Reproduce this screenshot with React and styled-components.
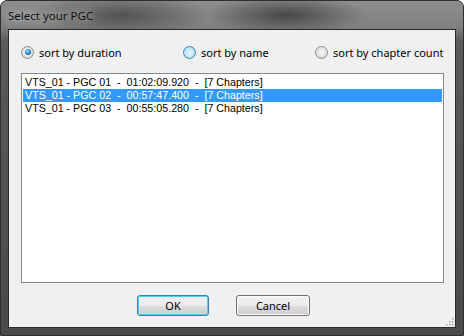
import React, { useState } from "react";
import styled, { createGlobalStyle } from "styled-components";

const GlobalStyle = createGlobalStyle`
  html, body {
    margin: 0;
    padding: 0;
    background: #ffffff;
  }
`;

const Window = styled.div`
  width: 464px;
  height: 336px;
  box-sizing: border-box;
  display: flex;
  flex-direction: column;
  border-radius: 7px 7px 0 0;
  border: 1px solid #2e2e2e;
  background:
    radial-gradient(ellipse 90px 22px at 120px 14px, rgba(40, 40, 40, 0.55), transparent),
    radial-gradient(ellipse 80px 20px at 285px 14px, rgba(30, 30, 30, 0.6), transparent),
    linear-gradient(to bottom, #8d8d8d 0, #808080 26px, #5a5a5a 40px, #4a4a4a 100%);
  font-family: "Noto Sans", "Open Sans", sans-serif;
`;

const TitleBar = styled.div`
  height: 28px;
  display: flex;
  align-items: center;
  padding-left: 7px;
  font-size: 11.5px;
  color: #111;
  text-shadow: 0 0 8px rgba(255, 255, 255, 0.9);
`;

const Client = styled.div`
  flex: 1;
  margin: 0 7px 7px 7px;
  border: 1px solid #2a2a2a;
  background: #f0f0f0;
  display: flex;
  flex-direction: column;
  padding: 12px 11px 0 12px;
  position: relative;
`;

const RadioRow = styled.div`
  display: grid;
  grid-template-columns: 162px 132px auto;
  height: 20px;
  align-items: center;
`;

const RadioLabel = styled.label`
  display: flex;
  align-items: center;
  gap: 5px;
  font-size: 11px;
  color: #000;
  cursor: default;
`;

const RadioDot = styled.span`
  width: 13px;
  height: 13px;
  border-radius: 50%;
  box-sizing: border-box;
  border: 1px solid ${({ hover }) => (hover ? "#3c7fb1" : "#8e8f8f")};
  background: ${({ hover }) =>
    hover
      ? "radial-gradient(circle at 50% 55%, #e4f4fc 0, #bde4f8 60%, #a3d6f5 100%)"
      : "radial-gradient(circle at 50% 45%, #f6f6f6 0, #dcdcdc 70%, #cfcfcf 100%)"};
  display: flex;
  align-items: center;
  justify-content: center;

  &::after {
    content: "";
    display: ${({ checked }) => (checked ? "block" : "none")};
    width: 6px;
    height: 6px;
    border-radius: 50%;
    background: radial-gradient(circle at 40% 35%, #9fd8ff 0, #1a78c2 60%, #0e4f8a 100%);
  }
`;

const ListBox = styled.div`
  margin-top: 11px;
  height: 210px;
  box-sizing: border-box;
  border: 1px solid #828790;
  background: #fff;
  padding: 2px 1px;
  font-family: "Liberation Sans", Arial, sans-serif;
  font-size: 10.7px;
`;

const ListItem = styled.div`
  height: 13px;
  line-height: 13px;
  padding-left: 2px;
  white-space: pre;
  color: ${({ selected }) => (selected ? "#fff" : "#000")};
  background: ${({ selected }) => (selected ? "#3399ff" : "transparent")};
`;

const ButtonRow = styled.div`
  display: flex;
  gap: 27px;
  margin-top: 12px;
  padding-left: 116px;
`;

const Button = styled.button`
  width: ${({ w }) => w}px;
  height: 21px;
  box-sizing: border-box;
  border-radius: 3px;
  border: 1px solid ${({ primary }) => (primary ? "#3c7fb1" : "#707070")};
  box-shadow: inset 0 0 0 1px ${({ primary }) => (primary ? "#48d0f5" : "#fcfcfc")};
  background: linear-gradient(to bottom, #f2f2f2 0, #ebebeb 50%, #dddddd 51%, #cfcfcf 100%);
  font-family: "Noto Sans", "Open Sans", sans-serif;
  font-size: 11px;
  color: #000;
  padding: 0;
`;

const Grip = styled.svg`
  position: absolute;
  right: 1px;
  bottom: 1px;
`;

const rows = [
  "VTS_01 - PGC 01  -  01:02:09.920  -  [7 Chapters]",
  "VTS_01 - PGC 02  -  00:57:47.400  -  [7 Chapters]",
  "VTS_01 - PGC 03  -  00:55:05.280  -  [7 Chapters]",
];

const sorts = [
  { label: "sort by duration" },
  { label: "sort by name", hover: true },
  { label: "sort by chapter count" },
];

export default function App() {
  const [sort, setSort] = useState(0);
  const [selected, setSelected] = useState(1);

  return (
    <>
      <GlobalStyle />
      <Window>
        <TitleBar>Select your PGC</TitleBar>
        <Client>
          <RadioRow>
            {sorts.map((s, i) => (
              <RadioLabel key={s.label} onClick={() => setSort(i)}>
                <RadioDot checked={sort === i} hover={s.hover} />
                {s.label}
              </RadioLabel>
            ))}
          </RadioRow>
          <ListBox>
            {rows.map((r, i) => (
              <ListItem key={r} selected={selected === i} onClick={() => setSelected(i)}>
                {r}
              </ListItem>
            ))}
          </ListBox>
          <ButtonRow>
            <Button primary w={72}>OK</Button>
            <Button w={74}>Cancel</Button>
          </ButtonRow>
          <Grip width="10" height="10" viewBox="0 0 10 10">
            {[
              [8, 2], [8, 5], [5, 5], [8, 8], [5, 8], [2, 8],
            ].map(([x, y]) => (
              <rect key={`${x}-${y}`} x={x} y={y} width="1.5" height="1.5" fill="#a9a9a9" />
            ))}
          </Grip>
        </Client>
      </Window>
    </>
  );
}
